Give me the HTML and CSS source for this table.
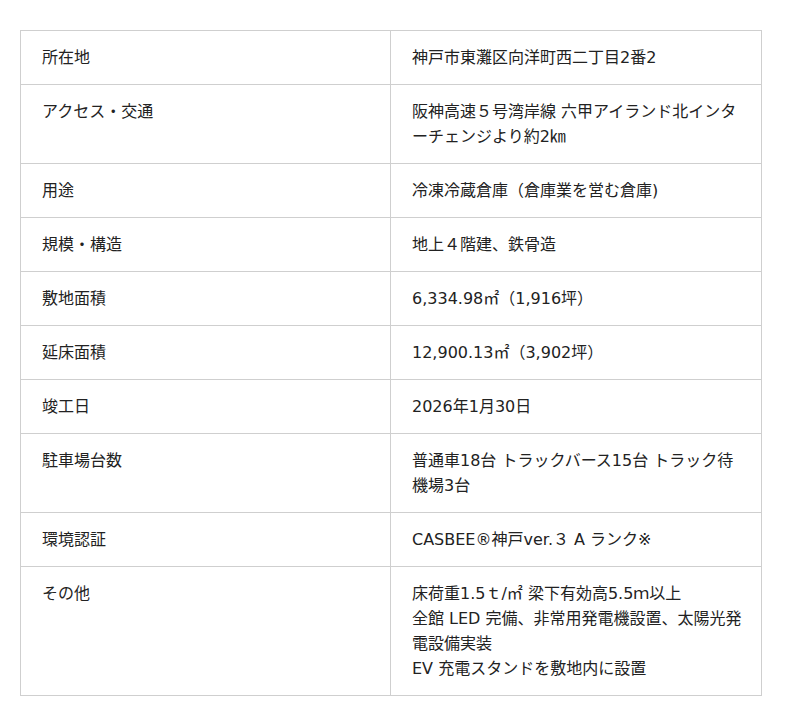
FILE: index.html
```html
<!DOCTYPE html>
<html lang="ja">
<head>
<meta charset="utf-8">
<link rel="stylesheet" href="styles.css">
</head>
<body>
<div class="page">
<table class="spec">
<tr><th>所在地</th><td>神戸市東灘区向洋町西二丁目2番2</td></tr>
<tr><th>アクセス・交通</th><td>阪神高速５号湾岸線 六甲アイランド北インターチェンジより約2㎞</td></tr>
<tr><th>用途</th><td>冷凍冷蔵倉庫（倉庫業を営む倉庫)</td></tr>
<tr><th>規模・構造</th><td>地上４階建、鉄骨造</td></tr>
<tr><th>敷地面積</th><td>6,334.98㎡（1,916坪）</td></tr>
<tr><th>延床面積</th><td>12,900.13㎡（3,902坪）</td></tr>
<tr><th>竣工日</th><td>2026年1月30日</td></tr>
<tr><th>駐車場台数</th><td>普通車18台 トラックバース15台 トラック待機場3台</td></tr>
<tr><th>環境認証</th><td>CASBEE®神戸ver.３ A ランク※</td></tr>
<tr><th>その他</th><td>床荷重1.5ｔ/㎡ 梁下有効高5.5ｍ以上<br>全館 LED 完備、非常用発電機設置、太陽光発電設備実装<br>EV 充電スタンドを敷地内に設置</td></tr>
</table>
</div>
</body>
</html>
```

FILE: styles.css
```css
html, body {
  margin: 0;
  padding: 0;
  background: #fff;
}
.page {
  padding: 30px 20px;
}
.spec {
  width: 742px;
  border-collapse: collapse;
  table-layout: fixed;
  font-family: "DejaVu Sans", "Noto Sans CJK JP", sans-serif;
  font-size: 16px;
  line-height: 25px;
  color: #222;
}
.spec th, .spec td {
  border: 1px solid #cfcfcf;
  vertical-align: top;
  text-align: left;
  font-weight: normal;
  padding: 14px 14px 14px 21px;
}
.spec th {
  width: 370px;
  box-sizing: border-box;
  padding-left: 21px;
}
```
